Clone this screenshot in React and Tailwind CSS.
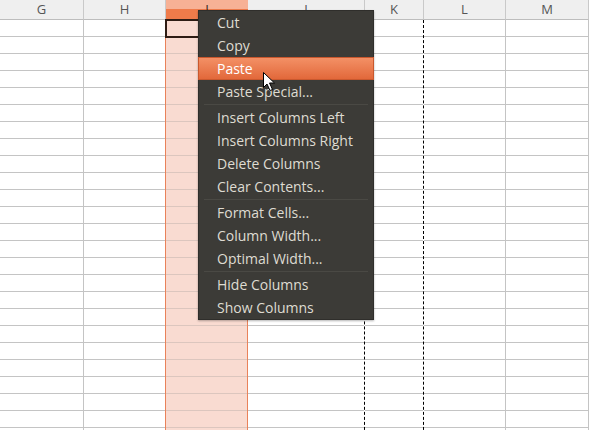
import React from 'react'

const COLUMNS = [
  { key: 'G', width: 'w-[84px]' },
  { key: 'H', width: 'w-[82px]' },
  { key: 'I', width: 'w-[82px]', selected: true },
  { key: 'J', width: 'w-[117px]', dashed: true },
  { key: 'K', width: 'w-[59px]', dashed: true },
  { key: 'L', width: 'w-[82px]' },
  { key: 'M', width: 'w-[83px]' },
]

const ROWS = Array.from({ length: 25 }, (_, i) => i)

const MENU = [
  ['Cut', 'Copy', 'Paste', 'Paste Special...'],
  ['Insert Columns Left', 'Insert Columns Right', 'Delete Columns', 'Clear Contents...'],
  ['Format Cells...', 'Column Width...', 'Optimal Width...'],
  ['Hide Columns', 'Show Columns'],
]

const Column = ({ col }) => {
  const bodyBorder = col.dashed
    ? 'border-r border-dashed border-r-black'
    : col.selected
      ? 'border-r border-r-[#e9825a]'
      : 'border-r border-r-[#c4c4c4]'

  return (
    <div className={`${col.width} flex flex-col shrink-0`}>
      {col.selected ? (
        <div className="h-[20px] flex items-center justify-center bg-[linear-gradient(#f7b195_0_9px,#ef7b4a_9px)] border-b border-b-[#e9825a] text-[13px] text-[#3a2a22]">
          I
        </div>
      ) : (
        <div className="h-[20px] flex items-center justify-center bg-[#efefef] border-b border-b-[#bdbdbd] border-r border-r-[#c9c9c9] text-[13px] text-[#555]">
          {col.key}
        </div>
      )}
      <div className={`flex-1 flex flex-col ${bodyBorder} ${col.selected ? 'bg-[#f9dbd1] border-l border-l-[#e9825a] -ml-px' : 'bg-white'}`}>
        {ROWS.map(r => (
          <div
            key={r}
            className={`h-[17px] shrink-0 border-b ${col.selected ? 'border-b-[#dcc6be]' : 'border-b-[#c4c4c4]'} ${col.selected && r === 0 ? 'outline-2 outline-[#2e1c14] -outline-offset-1' : ''}`}
          />
        ))}
      </div>
    </div>
  )
}

const Cursor = () => (
  <svg className="absolute left-[262px] top-[71px]" width="14" height="21" viewBox="0 0 14 21">
    <path
      d="M1.5 1.5 L1.5 16.5 L5 13 L8 19.5 L10.5 18.5 L7.5 12 L12.5 12 Z"
      fill="#fff"
      stroke="#000"
      strokeWidth="1"
      strokeLinejoin="round"
    />
  </svg>
)

export default function App() {
  return (
    <div className="relative w-[589px] h-[430px] overflow-hidden bg-white font-['Open_Sans',sans-serif]">
      <div className="flex h-full">
        {COLUMNS.map(c => (
          <Column key={c.key} col={c} />
        ))}
      </div>

      <div className="absolute left-[198px] top-[10px] w-[176px] bg-[#3c3b37] border border-[#2f2e2b] shadow-[0_1px_2px_rgba(0,0,0,0.3)]">
        {MENU.map((group, gi) => (
          <div key={gi}>
            {gi > 0 && (
              <div className="h-[3px] flex items-center px-[5px]">
                <div className="h-px w-full bg-[#2c2b28] border-b border-b-[#4a4944]" />
              </div>
            )}
            {group.map(item => (
              <div
                key={item}
                className={
                  item === 'Paste'
                    ? 'h-[23px] pl-[18px] flex items-center text-[14px] text-white bg-gradient-to-b from-[#f39065] to-[#e2683a] border border-[#c9582e] -mx-px'
                    : 'h-[23px] pl-[18px] flex items-center text-[14px] text-[#dfdbd2]'
                }
              >
                {item}
              </div>
            ))}
          </div>
        ))}
      </div>

      <Cursor />
    </div>
  )
}
